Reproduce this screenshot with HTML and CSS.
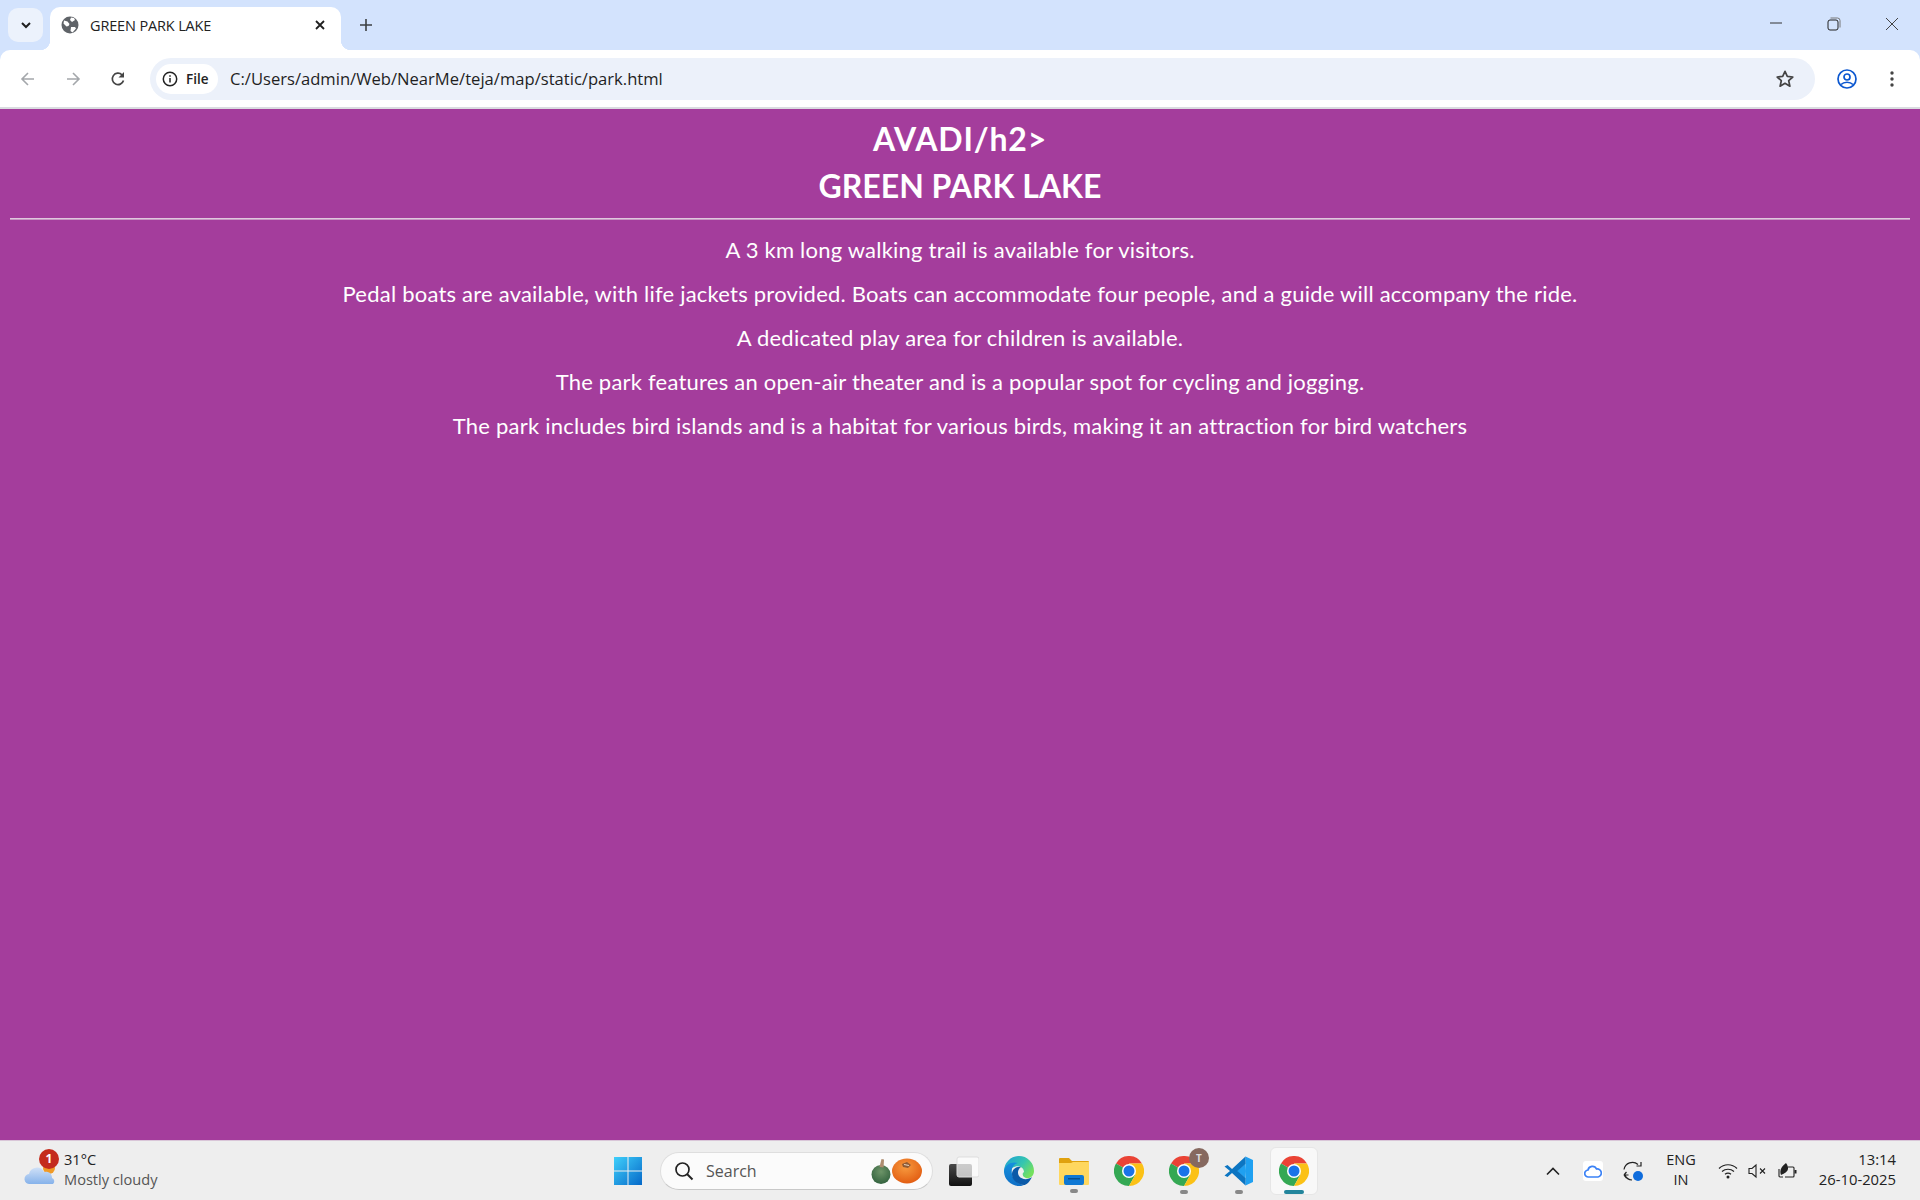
FILE: index.html
```html
<!DOCTYPE html>
<html lang="en">
<head>
<meta charset="utf-8">
<title>GREEN PARK LAKE</title>
<link rel="stylesheet" href="styles.css">
</head>
<body>
<div class="window">
  <header class="chrome">
    <div class="tabstrip">
      <button class="tabsearch"><svg width="12" height="12" viewBox="0 0 12 12"><path d="M2 4l4 4 4-4" fill="none" stroke="#1f1f1f" stroke-width="2"/></svg></button>
      <div class="tab">
        <svg class="favicon" width="18" height="18" viewBox="0 0 18 18"><circle cx="9" cy="9" r="8.5" fill="#5f6368"/><path d="M3 4.500l3.500 1 2 2.500-1 2-2 .5-3-3zM10 1.500l3 .5 1 2-3 2-2-2zM10 11h4l1 1.500-3.500 4-2-1.500z" fill="#fff"/></svg>
        <span class="tabtitle">GREEN PARK LAKE</span>
        <svg class="tabclose" width="12" height="12" viewBox="0 0 12 12"><path d="M2 2l8 8M10 2l-8 8" stroke="#1f1f1f" stroke-width="1.800"/></svg>
      </div>
      <svg class="newtab" width="14" height="14" viewBox="0 0 14 14"><path d="M7 1v12M1 7h12" stroke="#3c4043" stroke-width="1.600"/></svg>
      <div class="wincontrols">
        <svg width="14" height="14" viewBox="0 0 14 14"><path d="M1 6h12" stroke="#333" stroke-width="1"/></svg>
        <svg width="14" height="14" viewBox="0 0 14 14"><rect x="1" y="3" width="10" height="10" rx="2" fill="none" stroke="#222" stroke-width="1"/><path d="M3.500 1h7a2.500 2.500 0 0 1 2.500 2.500v7" fill="none" stroke="#777" stroke-width="1"/></svg>
        <svg width="14" height="14" viewBox="0 0 14 14"><path d="M1 1l12 12M13 1L1 13" stroke="#444" stroke-width="1"/></svg>
      </div>
    </div>
    <div class="toolbar">
      <svg class="navicon" width="16" height="16" viewBox="0 0 16 16"><path d="M14 8H2.500M8 2L2 8l6 6" fill="none" stroke="#a4a7ab" stroke-width="1.600"/></svg>
      <svg class="navicon" width="16" height="16" viewBox="0 0 16 16"><path d="M2 8h11.500M8 2l6 6-6 6" fill="none" stroke="#a4a7ab" stroke-width="1.600"/></svg>
      <svg class="navicon" width="16" height="16" viewBox="0 0 16 16"><path d="M13.500 9.500A5.700 5.700 0 1 1 12 3.800" fill="none" stroke="#444" stroke-width="1.700"/><path d="M14 1v5.500H8.500z" fill="#444"/></svg>
      <div class="omnibox">
        <div class="chip"><svg width="16" height="16" viewBox="0 0 16 16"><circle cx="8" cy="8" r="6.700" fill="none" stroke="#222" stroke-width="1.500"/><path d="M8 7v4.500M8 4.200v1.600" stroke="#222" stroke-width="1.500"/></svg><span>File</span></div>
        <span class="url">C:/Users/admin/Web/NearMe/teja/map/static/park.html</span>
        <svg class="star" width="20" height="20" viewBox="0 0 20 20"><path d="M10 2.300l2.300 5.100 5.500.6-4.100 3.700 1.200 5.500-4.900-2.900-4.900 2.900 1.200-5.500L2.200 8l5.500-.6z" fill="none" stroke="#444" stroke-width="1.700" stroke-linejoin="round"/></svg>
      </div>
      <svg class="avatar" width="20" height="20" viewBox="0 0 20 20"><circle cx="10" cy="10" r="9" fill="none" stroke="#0b57d0" stroke-width="1.700"/><circle cx="10" cy="8" r="3" fill="none" stroke="#0b57d0" stroke-width="1.700"/><path d="M4 15.500c3-3 9-3 12 0" fill="none" stroke="#0b57d0" stroke-width="1.700"/></svg>
      <svg class="kebab" width="4" height="16" viewBox="0 0 4 16"><circle cx="2" cy="2" r="1.700" fill="#444"/><circle cx="2" cy="8" r="1.700" fill="#444"/><circle cx="2" cy="14" r="1.700" fill="#444"/></svg>
    </div>
  </header>

  <main class="page">
    <h2 class="city">AVADI/h2&gt;</h2>
    <h1 class="park">GREEN PARK LAKE</h1>
    <hr class="rule">
    <p>A 3 km long walking trail is available for visitors.</p>
    <p>Pedal boats are available, with life jackets provided. Boats can accommodate four people, and a guide will accompany the ride.</p>
    <p>A dedicated play area for children is available.</p>
    <p>The park features an open-air theater and is a popular spot for cycling and jogging.</p>
    <p>The park includes bird islands and is a habitat for various birds, making it an attraction for bird watchers</p>
  </main>

  <footer class="taskbar">
    <div class="weather">
      <div class="weathericon">
        <svg width="34" height="34" viewBox="0 0 34 34"><defs><linearGradient id="cl" x1="0" y1="0" x2="0" y2="1"><stop offset="0" stop-color="#cfe0f7"/><stop offset="1" stop-color="#86b2ea"/></linearGradient></defs><circle cx="25" cy="15" r="6" fill="#f09a26"/><path d="M6 31a5 5 0 0 1-1-10 8 8 0 0 1 15-2 6 6 0 0 1 8 6 3.500 3.500 0 0 1 1 6z" fill="url(#cl)"/></svg>
        <span class="badge">1</span>
      </div>
      <div class="weathertext"><span class="temp">31°C</span><span class="cond">Mostly cloudy</span></div>
    </div>
    <div class="center">
      <svg class="tbicon" width="30" height="30" viewBox="0 0 30 30"><defs><linearGradient id="w" x1="0" y1="0" x2="1" y2="1"><stop offset="0" stop-color="#3fd0fb"/><stop offset="1" stop-color="#0668c8"/></linearGradient></defs><path d="M1 1h13.500v13.500H1zM15.500 1H29v13.500H15.500zM1 15.500h13.500V29H1zM15.500 15.500H29V29H15.500z" fill="url(#w)"/></svg>
      <div class="search">
        <svg width="20" height="20" viewBox="0 0 20 20"><circle cx="8.500" cy="8.500" r="6.500" fill="none" stroke="#222" stroke-width="1.700"/><path d="M13 13l5.500 5.500" stroke="#222" stroke-width="2"/></svg>
        <span class="searchlabel">Search</span>
        <svg class="pumpkins" width="52" height="26" viewBox="0 0 52 26"><defs><radialGradient id="gp" cx=".5" cy=".35" r=".7"><stop offset="0" stop-color="#6d9468"/><stop offset="1" stop-color="#2f5f3c"/></radialGradient><radialGradient id="op" cx=".45" cy=".35" r=".7"><stop offset="0" stop-color="#f79a3e"/><stop offset="1" stop-color="#e1590f"/></radialGradient></defs><ellipse cx="10" cy="16.500" rx="9.500" ry="9.500" fill="url(#gp)"/><path d="M8.500 9l2-8 2.500.5-.5 8z" fill="#ae8d70"/><ellipse cx="36" cy="13" rx="15" ry="12.500" fill="url(#op)"/><path d="M31 6l5-2 4 3-3 3-5-1z" fill="#8f5a34"/><path d="M33 6.500l5 1" stroke="#e8d5bd" stroke-width="1.200"/></svg>
      </div>
      <svg class="tbicon" width="30" height="30" viewBox="0 0 30 30"><defs><linearGradient id="tv" x1="0" y1="0" x2="0" y2="1"><stop offset="0" stop-color="#4a4a4a"/><stop offset="1" stop-color="#111"/></linearGradient></defs><rect y="8" width="23" height="22" rx="2" fill="url(#tv)"/><rect x="8" y="1" width="22" height="20" rx="2" fill="#fff" fill-opacity=".72" stroke="#ddd"/></svg>
      <svg class="tbicon" width="30" height="30" viewBox="0 0 30 30"><defs><linearGradient id="e1" x1="0" y1="0" x2="1" y2=".6"><stop offset="0" stop-color="#1b9ed8"/><stop offset=".6" stop-color="#35c5b0"/><stop offset="1" stop-color="#74e05e"/></linearGradient><linearGradient id="e2" x1="0" y1="0" x2="0" y2="1"><stop offset="0" stop-color="#1690dd"/><stop offset="1" stop-color="#0f6fc6"/></linearGradient></defs><path d="M0 15A15 15 0 0 1 30 15C30 20 26 23 22 22C18 21 18 17 20 16C20 11 14 8 8 12L0 17z" fill="url(#e1)"/><path d="M15 30A15 15 0 0 1 0 15C1 8 8 5 14 7C9 8 7 13 8 18C9 24 14 28 20 29C18 30 16 30 15 30z" fill="url(#e2)"/><path d="M8 18C8 13 13 10 17 11C14 13 13 17 15 20C18 24 24 24 28 21C25 27 22 29 20 29C13 28 8 24 8 18z" fill="#0b5aa8"/></svg>
      <div class="pinned">
        <svg width="30" height="28" viewBox="0 0 30 28"><path d="M0 2a1 1 0 0 1 1-1h9l3 3h16a1 1 0 0 1 1 1v3H0z" fill="#e0a10e"/><path d="M0 6h12l2-1h16v22a1 1 0 0 1-1 1H1a1 1 0 0 1-1-1z" fill="#ffd75e"/><rect x="5" y="18" width="20" height="10" rx="2" fill="#0f78d4"/><rect x="9" y="21" width="12" height="1.500" fill="#074f8f"/></svg>
        <span class="dot"></span>
      </div>
      <svg class="tbicon" width="30" height="30" viewBox="0 0 30 30"><use href="#chromeicon"/></svg>
      <div class="pinned">
        <div class="profile"><svg width="30" height="30" viewBox="0 0 30 30"><use href="#chromeicon"/></svg><span class="avatarT">T</span></div>
        <span class="dot"></span>
      </div>
      <div class="pinned">
        <svg width="30" height="30" viewBox="0 0 30 30"><path d="M21.500 0.500L29 4v22l-7.500 3.500L21 8l-8 7 8 7z" fill="#1fa0f1"/><path d="M21.500 0.500V8l-8 7 8 7v7.500L8 17l-4.500 4L.5 19.500 6 15 .5 10.500 3.500 9 8 13z" fill="#0c75c2"/></svg>
        <span class="dot"></span>
      </div>
      <div class="active">
        <svg width="30" height="30" viewBox="0 0 30 30"><use href="#chromeicon"/></svg>
        <span class="activebar"></span>
      </div>
    </div>
    <div class="tray">
      <svg width="14" height="10" viewBox="0 0 14 10"><path d="M1 8.500l6-6 6 6" fill="none" stroke="#222" stroke-width="1.600"/></svg>
      <span class="cloud"><svg width="18" height="14" viewBox="0 0 18 14"><path d="M4.500 13a3.500 3.500 0 0 1-.5-7 4.500 4.500 0 0 1 8.500-1 4 4 0 0 1 1.500 8z" fill="none" stroke="#3b82f6" stroke-width="1.700"/></svg></span>
      <svg class="sync" width="20" height="20" viewBox="0 0 20 20"><path d="M1 8.500A8.500 8.500 0 0 1 15 3.500" fill="none" stroke="#222" stroke-width="1.200"/><path d="M18 1v4h-4.500" fill="none" stroke="#222" stroke-width="1.200"/><path d="M1 14h4.500M1 14l2.500 3M1 14l2.500-3M2 14a8 8 0 0 0 7 5" fill="none" stroke="#222" stroke-width="1.200"/><circle cx="15" cy="15" r="5" fill="#0f6cdc"/></svg>
      <div class="lang"><span>ENG</span><span>IN</span></div>
      <div class="status">
        <svg width="20" height="16" viewBox="0 0 20 16"><path d="M1 5.500c5-5 13-5 18 0M4 8.500c3.500-3 8.500-3 12 0M7 11.300c2-1.500 4-1.500 6 0" fill="none" stroke="#222" stroke-width="1.200"/><circle cx="10" cy="14" r="1.500" fill="#222"/></svg>
        <svg width="20" height="16" viewBox="0 0 20 16"><path d="M1 5.500h3L8 2v12L4 10.500H1z" fill="none" stroke="#222" stroke-width="1.100"/><path d="M12 5.500l5 5M17 5.500l-5 5" stroke="#222" stroke-width="1.100"/></svg>
        <svg width="20" height="16" viewBox="0 0 20 16"><path d="M5 14H2a1 1 0 0 1-1-1V6M10 4h5a1 1 0 0 1 1 1v8a1 1 0 0 1-1 1H7" fill="none" stroke="#222" stroke-width="1.100"/><rect x="16.500" y="7" width="2" height="3.500" fill="#222"/><path d="M3 12C1 7 4 3 8 0c3 4 3 8-2 10.500z" fill="#222"/></svg>
      </div>
      <div class="clock"><span>13:14</span><span>26-10-2025</span></div>
    </div>
  </footer>
</div>
<svg class="defs" width="0" height="0" viewBox="0 0 30 30"><defs><g id="chromeicon"><path d="M15 15L2 7.500A15 15 0 0 1 28 7.500H15z" fill="#ea4335"/><path d="M15 15L2 7.500A15 15 0 0 0 15 30l6.500-11.500z" fill="#34a853"/><path d="M15 15l6.500 3.500L15 30A15 15 0 0 0 28 7.500H15z" fill="#fbc116"/><circle cx="15" cy="15" r="7" fill="#fff"/><circle cx="15" cy="15" r="5.500" fill="#1a73e8"/></g></defs></svg>
</body>
</html>
```
FILE: styles.css
```css
* { box-sizing: border-box; }
html, body { margin: 0; height: 100%; }
body { font-family: "Open Sans", "Liberation Sans", sans-serif; overflow: hidden; background: #a43d9c; }
.defs { position: absolute; }
.window { display: grid; grid-template-rows: 109px 1fr 60px; height: 1200px; width: 1920px; }

.chrome { background: #d3e3fd; display: flex; flex-direction: column; }
.tabstrip { height: 50px; display: flex; align-items: flex-start; padding: 7px 0 0 8px; }
.tabsearch { width: 35px; height: 34px; margin-top: 1px; border: 0; padding: 0; background: #ecf2fc; border-radius: 10px; display: flex; align-items: center; justify-content: center; }
.tab { position: relative; width: 291px; height: 43px; margin-left: 7px; background: #fff; border-radius: 10px 10px 0 0; display: flex; align-items: center; padding: 0 15px 7px 11px; }
.tab::before, .tab::after { content: ""; position: absolute; bottom: 0; width: 10px; height: 10px; }
.tab::before { left: -10px; background: radial-gradient(circle at 0 0, transparent 10px, #fff 10.500px); }
.tab::after { right: -10px; background: radial-gradient(circle at 100% 0, transparent 10px, #fff 10.500px); }
.favicon { flex: none; }
.tabtitle { font-size: 14.500px; color: #222; margin-left: 11px; flex: 1; letter-spacing: -0.15px; }
.newtab { margin: 11px 0 0 18px; }
.wincontrols { margin-left: auto; display: flex; gap: 44px; padding: 10px 21px 0 0; }
.toolbar { height: 59px; background: #fff; border-radius: 10px 10px 0 0; border-bottom: 2px solid #dadce0; display: flex; align-items: center; padding: 0 26px 0 20px; }
.navicon { margin-right: 29px; flex: none; }
.navicon:nth-child(3) { margin-right: 24px; }
.omnibox { flex: 1; height: 42px; background: #ecf1fa; border-radius: 21px; display: flex; align-items: center; padding: 0 20px 0 6px; }
.chip { height: 30px; width: 62px; background: #fff; border-radius: 15px; display: flex; align-items: center; gap: 8px; padding-left: 6px; font-size: 13.500px; font-weight: 600; color: #222; }
.url { font-size: 16.600px; color: #1f1f1f; margin-left: 12px; flex: 1; }
.avatar { margin-left: 22px; }
.kebab { margin-left: 33px; }

.page { color: #fff; padding: 0 10px; text-align: center; min-height: 0; font-family: "Lato", sans-serif; }
.city, .park { margin: 0; font-size: 32px; font-weight: 700; line-height: 47px; }
.city { padding-top: 6px; letter-spacing: 0.8px; }
.rule { margin: 9px 0 8px; border: 0; border-top: 1px solid #e0c8de; border-bottom: 1px solid #c796c3; height: 2px; }
.page p { margin: 0; font-size: 22px; line-height: 44px; letter-spacing: 0.22px; }

.taskbar { background: #eeeeee; border-top: 1px solid #d9c6d8; display: grid; grid-template-columns: 589px auto 1fr; align-items: center; padding: 0 24px; color: #222; }
.weather { display: flex; align-items: center; gap: 8px; }
.weathericon { position: relative; width: 32px; height: 34px; margin-top: -2px; }
.badge { position: absolute; left: 15px; top: -4px; width: 20px; height: 20px; border-radius: 50%; background: #c42b1c; color: #fff; font-size: 12px; font-weight: 700; display: flex; align-items: center; justify-content: center; }
.weathertext { display: flex; flex-direction: column; font-size: 14.600px; line-height: 20px; margin: -4px 0 0 0; }
.cond { color: #555; }
.center { display: flex; align-items: center; gap: 25px; }
.search { width: 273px; height: 38px; margin: 0 -9px 0 -8px; background: #fbfbfb; border: 1px solid #dedede; border-bottom-color: #c8c8c8; border-radius: 19px; display: flex; align-items: center; padding: 0 9px 0 13px; }
.searchlabel { font-size: 16px; color: #555; margin-left: 12px; flex: 1; }
.pinned { position: relative; display: flex; flex-direction: column; align-items: center; }
.dot { position: absolute; bottom: -8px; width: 8px; height: 4px; border-radius: 2px; background: #888; }
.profile { position: relative; height: 30px; }
.avatarT { position: absolute; right: -10px; top: -8px; width: 20px; height: 20px; border-radius: 50%; background: #86695f; color: #ddd; font-size: 10px; font-weight: 700; display: flex; align-items: center; justify-content: center; }
.active { width: 48px; height: 48px; margin: 0 -9px; background: #f8f8f8; border: 1px solid #e6e6e6; border-radius: 6px; display: flex; align-items: center; justify-content: center; position: relative; }
.activebar { position: absolute; bottom: 0; left: 13px; width: 20px; height: 4px; border-radius: 2px; background: #23859c; }
.tray { display: flex; align-items: center; justify-content: flex-end; font-size: 14.500px; }
.cloud { width: 20px; height: 20px; background: #fff; border-radius: 3px; display: flex; align-items: center; justify-content: center; margin: 0 20px 0 23px; }
.lang { width: 30px; display: flex; flex-direction: column; align-items: center; line-height: 20px; margin: -1px 22px 0 23px; }
.status { display: flex; gap: 10px; }
.clock { width: 77px; display: flex; flex-direction: column; align-items: flex-end; line-height: 20px; margin: -3px 0 0 21px; white-space: nowrap; font-size: 14.800px; }
```
